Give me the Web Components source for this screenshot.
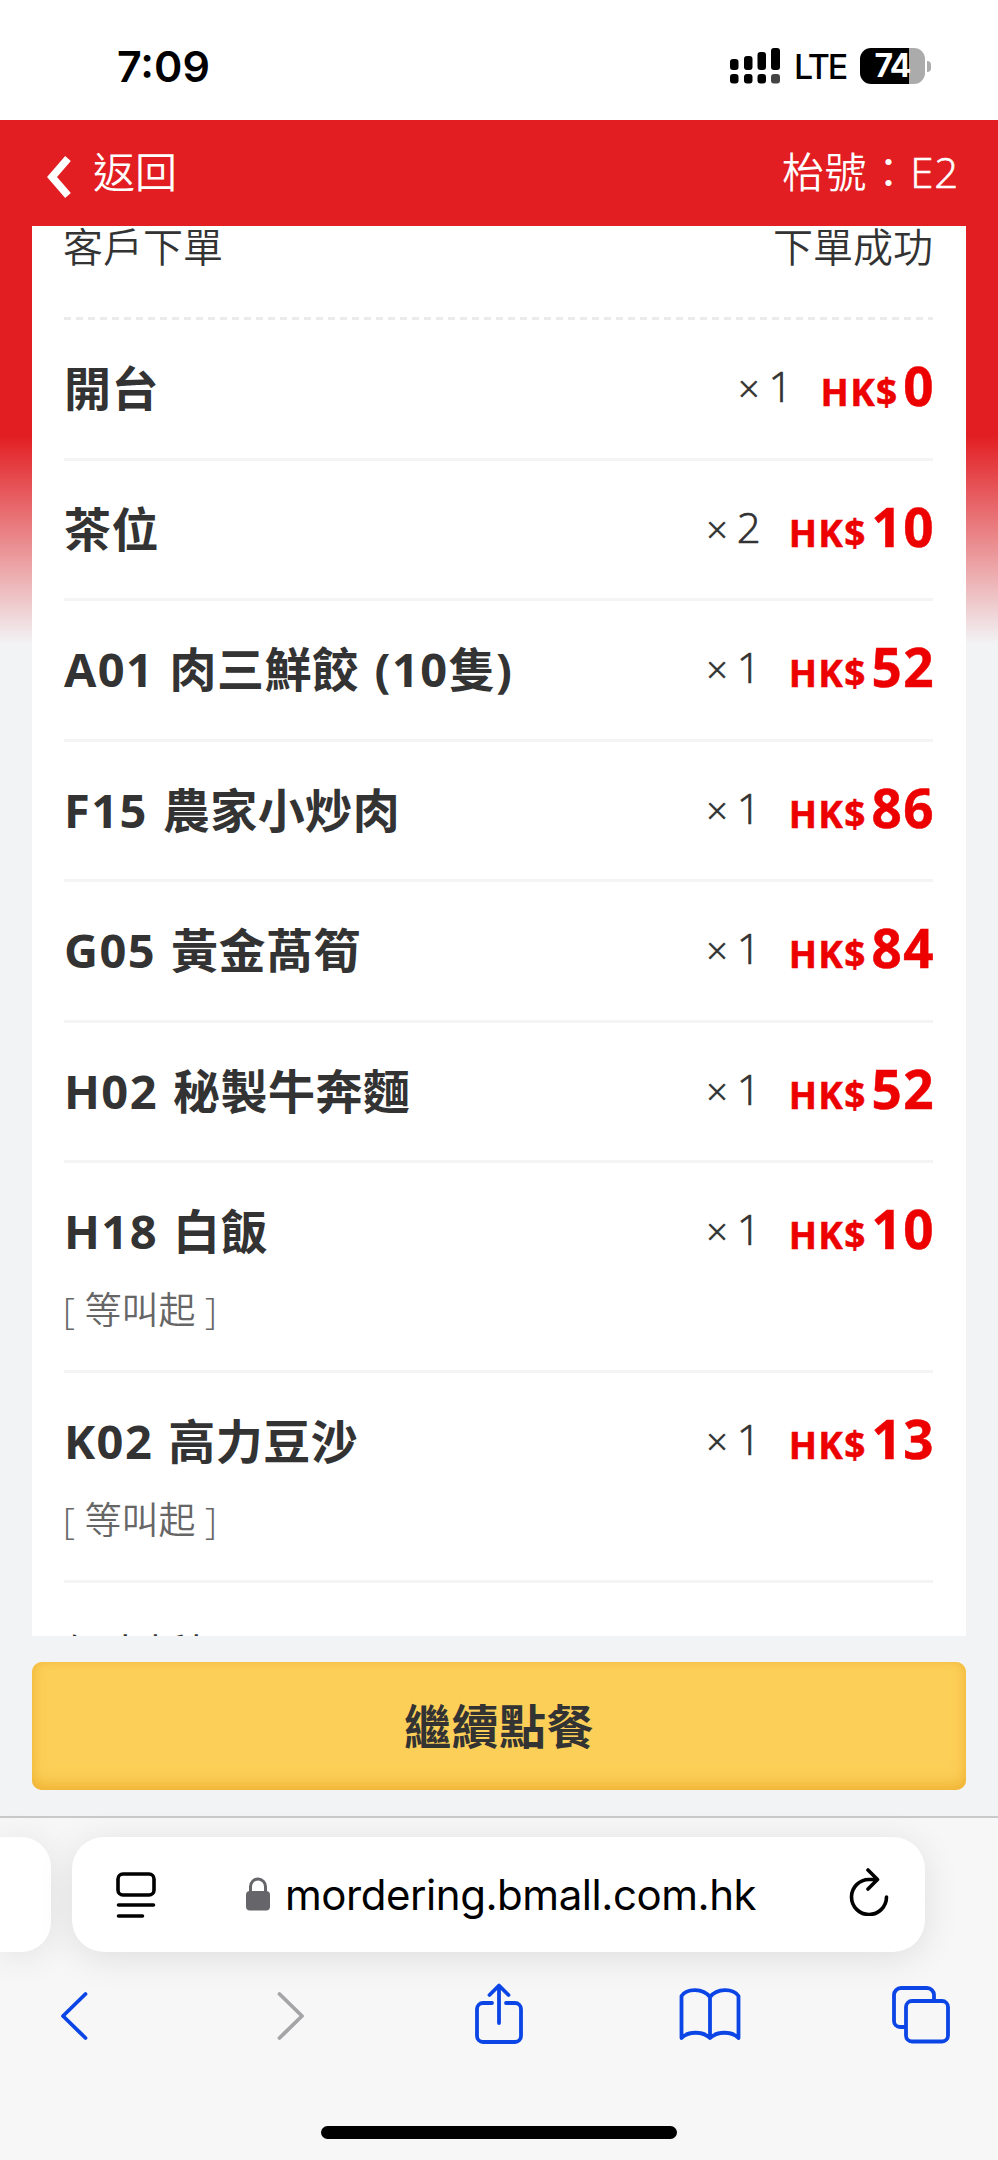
<!DOCTYPE html>
<html lang="zh-Hant">
<head>
<meta charset="utf-8">
<title>訂單</title>
<style>
html,body{margin:0;padding:0}
body{width:998px;height:2160px;overflow:hidden;background:#fff;color:#333;font-family:"Open Sans","Noto Sans CJK TC",sans-serif}
</style>
</head>
<body>
<order-screen></order-screen>
<script>
const define = (name, html, setup) => customElements.define(name, class extends HTMLElement {
  constructor() {
    super();
    const t = document.createElement('template');
    t.innerHTML = html;
    this.attachShadow({ mode: 'open' }).appendChild(t.content.cloneNode(true));
  }
  connectedCallback() { if (setup) setup(this, this.shadowRoot); }
});

define('status-bar', `
<style>
:host{display:flex;box-sizing:border-box;height:120px;padding:36px 67px 0 117px;justify-content:space-between;align-items:flex-start;background:#fff;color:#000;font-family:Inter,sans-serif}
.time{font-size:43px;line-height:60px;font-weight:600;letter-spacing:0}
.right{display:flex;align-items:center;height:60px}
.signal{width:50px;height:36px;margin-right:14px}
.lte{font-size:34px;font-weight:500;line-height:60px;letter-spacing:-2.2px;width:66px;padding-top:2px}
.battery{display:flex;align-items:center}
.level{box-sizing:border-box;width:65px;height:36px;border-radius:11px;background:linear-gradient(90deg,#000 49px,#ababab 49px);color:#fff;font-size:32px;line-height:36px;font-weight:700;text-align:right;padding-right:15px;letter-spacing:-1.5px}
.nub{width:4px;height:11px;margin-left:2px;border-radius:0 4px 4px 0;background:#ababab}
</style>
<span class="time">7:09</span>
<div class="right">
<svg class="signal" viewBox="0 0 50 36"><g fill="#000"><rect x="0" y="11" width="8.5" height="11" rx="3"/><rect x="14" y="8" width="8.5" height="14" rx="3"/><rect x="27.5" y="4" width="8.5" height="18" rx="3"/><rect x="41" y="0" width="9" height="22" rx="3"/><rect x="0" y="26" width="8.5" height="9.5" rx="3"/><rect x="14" y="26" width="8.5" height="9.5" rx="3"/><rect x="27.5" y="26" width="8.5" height="9.5" rx="3"/></g><rect x="41" y="26" width="9" height="9.5" rx="3" fill="#444"/></svg>
<span class="lte">LTE</span>
<div class="battery"><span class="level">74</span><span class="nub"></span></div>
</div>`);

define('page-header', `
<style>
:host{display:flex;box-sizing:border-box;height:106px;padding:0 39px 2px 46px;align-items:center;justify-content:space-between;background:#e21e22;color:#fff;font-size:42px;font-weight:350;line-height:60px}
.back{display:flex;align-items:center}
.table{letter-spacing:.8px}
.code{-webkit-text-stroke:.6px currentColor}
svg{width:26px;height:44px;margin:10px 21px 0 0}
</style>
<div class="back"><svg viewBox="0 0 26 44"><path d="M22 3.5 L6 22 L22 40.5" fill="none" stroke="#fff" stroke-width="7.5"/></svg><span><slot name="back"></slot></span></div>
<span class="table"><slot name="table"></slot><span class="code"><slot name="code"></slot></span></span>`);

define('order-row', `
<style>
:host{display:block;box-sizing:border-box;height:140.5px;padding-top:34px;border-bottom:3px solid #f4f4f5}
:host([note]){height:210px}
.line{display:flex;align-items:baseline;line-height:64px;white-space:nowrap}
.name{flex:1;font-size:47px;font-weight:700;letter-spacing:.5px;word-spacing:1.5px}
.name .lat{letter-spacing:1.4px}
.qty{font-size:42px;font-weight:350;margin-right:28px;transform:translateY(-4px);-webkit-text-stroke:.7px currentColor}
.x{margin-right:9px;font-size:37px}
.cur{font-size:37px;font-weight:700;color:#ec0000;margin-right:4.5px;letter-spacing:1.4px;-webkit-text-stroke:.5px currentColor}
.amt{font-size:53px;font-weight:700;color:#ec0000;letter-spacing:1.5px;margin-right:-2px;-webkit-text-stroke:.5px currentColor}
.note{font-size:37px;line-height:50px;margin:18px 0 0 -1px;font-weight:350;color:#666}
</style>
<div class="line"><span class="name"></span><span class="qty"><span class="x">×</span><span class="n"></span></span><span class="cur">HK$</span><span class="amt"></span></div>
<div class="note"></div>`, (el, r) => {
  r.querySelector('.n').textContent = el.getAttribute('qty');
  r.querySelector('.amt').textContent = el.getAttribute('price');
  const name = r.querySelector('.name');
  name.replaceChildren(...el.getAttribute('name').match(/[\x20-\x7e]+|[^\x20-\x7e]+/g).map(run => {
    const s = document.createElement('span');
    s.textContent = run;
    if (run.charCodeAt(0) < 127) s.className = 'lat';
    return s;
  }));
  const n = r.querySelector('.note');
  if (el.hasAttribute('note')) n.textContent = '[ ' + el.getAttribute('note') + ' ]'; else n.remove();
});

define('order-card', `
<style>
:host{display:block;box-sizing:border-box;height:1410px;margin:0 32px;padding:0 33px 0 32px;background:#fff;overflow:hidden}
.head{display:flex;justify-content:space-between;height:91px;margin-left:-1px;font-size:40px;line-height:42px;font-weight:350}
.dash{height:3px;background:repeating-linear-gradient(90deg,#ebebeb 0 7px,#fff 7px 12px)}
.foot{display:flex;justify-content:space-between;padding-top:40px;font-size:41px;line-height:60px;font-weight:400}
.value{transform:translateY(-3px)}
</style>
<div class="head"><slot name="source"></slot><slot name="state"></slot></div>
<div class="dash"></div>
<slot></slot>
<div class="foot"><slot name="label"></slot><span class="value"><slot name="value"></slot></span></div>`);

define('continue-button', `
<style>
:host{display:flex;height:128px;margin:26px 32px;align-items:center;justify-content:center;border-radius:10px;background:#fccf58;box-shadow:inset 0 -8px 18px -4px #eeb132,inset 0 0 9px #f4bd43;font-size:47px;font-weight:700;line-height:64px;letter-spacing:.5px}
</style><slot></slot>`);

define('address-bar', `
<style>
:host{display:flex;height:115px;padding-top:19px}
.prev{width:51px;background:#fff;border-radius:0 30px 30px 0;box-shadow:0 4px 36px rgba(0,0,0,.09)}
.field{display:flex;align-items:center;box-sizing:border-box;width:853px;margin-left:21px;padding:0 36px 0 44px;background:#fff;border-radius:32px;box-shadow:0 6px 36px rgba(0,0,0,.10)}
.url{display:flex;align-items:center;flex:1;margin-left:90px;color:#000;font:400 42px/60px Inter,sans-serif;letter-spacing:-.45px}
.url svg{margin:0 15px 2px 0;width:24px;height:34px}
.site{width:40px;height:46px}
.reload{width:40px;height:48px;margin-bottom:6px}
</style>
<div class="prev"></div>
<div class="field">
<svg class="site" viewBox="0 0 40 46" fill="none" stroke="#000" stroke-width="3.6" stroke-linecap="round"><rect x="2" y="2" width="36" height="21" rx="5"/><path d="M2.5 33H37.5M2.5 44H26.5"/></svg>
<div class="url"><svg viewBox="0 0 24 34"><path d="M4.5 16V9.5a7.500 7.500 0 0 1 15 0V16" fill="none" stroke="#65656a" stroke-width="3"/><rect y="14" width="24" height="19.5" rx="4" fill="#65656a"/></svg><slot></slot></div>
<svg class="reload" viewBox="0 0 40 48" fill="none" stroke="#000" stroke-width="3.6" stroke-linecap="round" stroke-linejoin="round"><path d="M28 11.500H20A17.500 17.500 0 1 0 37.500 29M19 2L28.500 11.500L19 21"/></svg>
</div>`);

define('browser-toolbar', `
<style>
:host{display:flex;align-items:center;height:64px;margin:29px 0 0 59px}
svg{flex:none;fill:none;stroke:#0b45e6;stroke-width:3.8;stroke-linecap:round;stroke-linejoin:round;height:64px}
.fwd{stroke:#a5a5a7;margin-left:187px}
.share{margin-left:168px}
.book{margin-left:155px}
.tabs{margin-left:149px}
</style>
<svg width="30" viewBox="0 0 30 64"><path d="M26.500 13L4 35L26.500 57"/></svg>
<svg class="fwd" width="30" viewBox="0 0 30 64"><path d="M3.500 13L26 35L3.500 57"/></svg>
<svg class="share" width="50" viewBox="0 0 50 64"><path d="M18 22H9a6 6 0 0 0-6 6V55a6 6 0 0 0 6 6H41a6 6 0 0 0 6-6V28a6 6 0 0 0-6-6H32M25 42V5M15.500 14L25 4.500L34.500 14"/></svg>
<svg class="book" width="62" viewBox="0 0 62 64"><path d="M31 16C24 7 8 7 2.500 15V57C9 50 24 50 31 57C38 50 53 50 59.500 57V15C54 7 38 7 31 16V57"/></svg>
<svg class="tabs" width="60" viewBox="0 0 60 64"><path d="M15 46H10a6 6 0 0 1-6-6V14a7 7 0 0 1 7-7H37a7 7 0 0 1 7 7V20"/><rect x="16" y="20" width="42" height="40.500" rx="6"/></svg>`);

define('order-screen', `
<style>
:host{display:block;width:998px;height:2160px;overflow:hidden}
.wrap{height:1696px;background:linear-gradient(#e21e22 0,#e21e22 315px,#f2f3f5 524px)}
.chrome{box-sizing:border-box;height:344px;border-top:2px solid #c9c9cb;background:#f7f7f7;display:flex;flex-direction:column}
.home{width:356px;height:13px;border-radius:7px;background:#000;margin:81px auto 0}
</style>
<status-bar></status-bar>
<div class="wrap">
<page-header><span slot="back">返回</span><span slot="table">枱號：</span><span slot="code">E2</span></page-header>
<order-card>
<span slot="source">客戶下單</span><span slot="state">下單成功</span>
<order-row qty="1" price="0" name="開台"></order-row>
<order-row qty="2" price="10" name="茶位"></order-row>
<order-row qty="1" price="52" name="A01 肉三鮮餃 (10隻)"></order-row>
<order-row qty="1" price="86" name="F15 農家小炒肉"></order-row>
<order-row qty="1" price="84" name="G05 黃金萵筍"></order-row>
<order-row qty="1" price="52" name="H02 秘製牛奔麵"></order-row>
<order-row qty="1" price="10" note="等叫起" name="H18 白飯"></order-row>
<order-row qty="1" price="13" note="等叫起" name="K02 高力豆沙"></order-row>
<span slot="label">優惠折扣</span><span slot="value">HK$0.00</span>
</order-card>
<continue-button>繼續點餐</continue-button>
</div>
<div class="chrome">
<address-bar>mordering.bmall.com.hk</address-bar>
<browser-toolbar></browser-toolbar>
<div class="home"></div>
</div>`);
</script>
</body>
</html>
